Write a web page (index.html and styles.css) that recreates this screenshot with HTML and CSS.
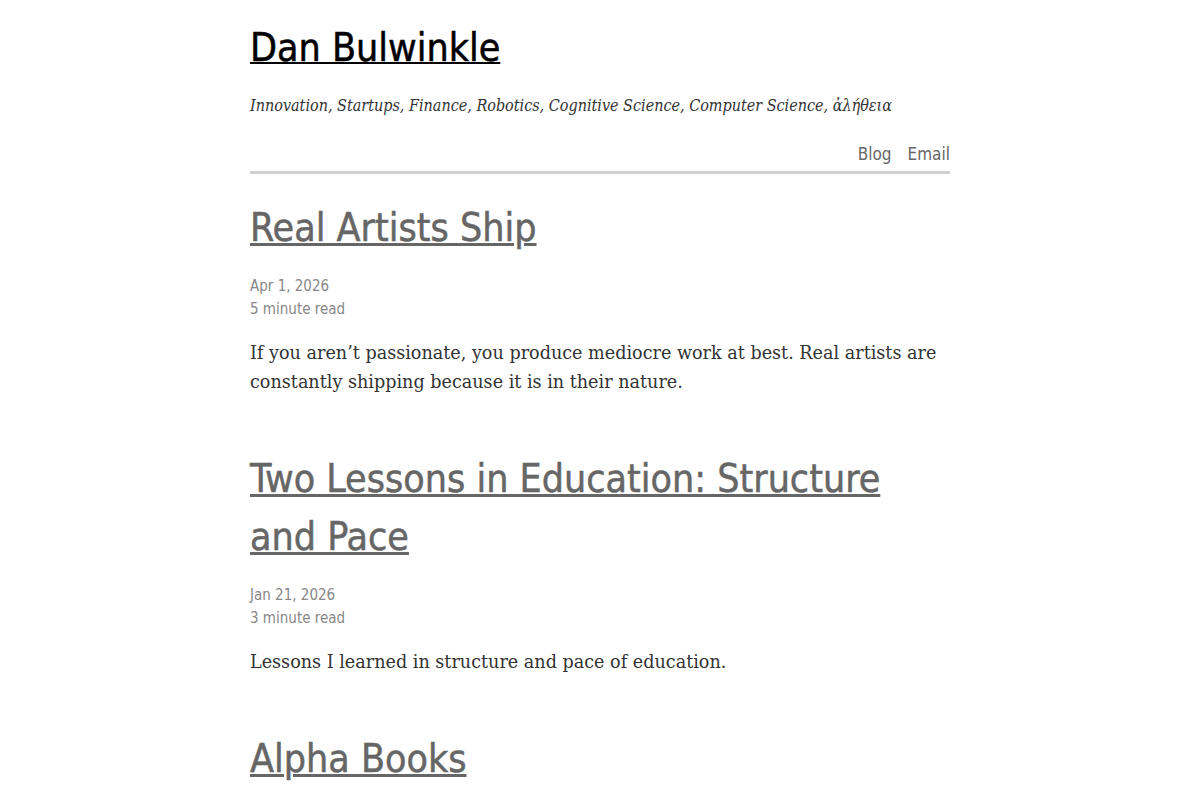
FILE: index.html
```html
<!DOCTYPE html>
<html>
  <head>
    <title>Dan Bulwinkle</title>
    <link rel="stylesheet" href="styles.css">
  </head>
  <body>
    <div class="wrapper">
      <header class="site-header">
        <h1 class="site-title"><a href="#">Dan Bulwinkle</a></h1>
        <p class="site-tagline">Innovation, Startups, Finance, Robotics, Cognitive Science, Computer Science, ἀλήθεια</p>
        <nav class="site-nav">
          <a href="#">Blog</a>
          <a href="#">Email</a>
        </nav>
      </header>

      <div class="posts">
        <article class="post">
          <h2 class="post-title"><a href="#">Real Artists Ship</a></h2>
          <div class="post-meta">
            <span>Apr 1, 2026</span>
            <span>5 minute read</span>
          </div>
          <p class="post-excerpt">If you aren’t passionate, you produce mediocre work at best. Real artists are constantly shipping because it is in their nature.</p>
        </article>

        <article class="post">
          <h2 class="post-title"><a href="#">Two Lessons in Education: Structure and Pace</a></h2>
          <div class="post-meta">
            <span>Jan 21, 2026</span>
            <span>3 minute read</span>
          </div>
          <p class="post-excerpt">Lessons I learned in structure and pace of education.</p>
        </article>

        <article class="post">
          <h2 class="post-title"><a href="#">Alpha Books</a></h2>
        </article>
      </div>
    </div>
  </body>
</html>
```

FILE: styles.css
```css
body {
  margin: 0;
  background: #fff;
  color: #333;
  font-family: "DejaVu Serif", serif;
}

.wrapper {
  width: 700px;
  margin: 0 auto;
}

/* header */

.site-header {
  display: flex;
  flex-direction: column;
  padding-top: 22px;
  border-bottom: 3px solid #d0d0d0;
}

.site-title {
  margin: 0;
  font-family: "DejaVu Sans Condensed", sans-serif;
  font-size: 39px;
  font-weight: 400;
  line-height: 52px;
  -webkit-text-stroke: 0.5px #000;
}

.site-title a {
  color: #000;
  text-decoration-thickness: 2px;
}

.site-tagline {
  margin: 21px 0 0;
  font-family: "DejaVu Serif Condensed", serif;
  font-style: italic;
  font-size: 16px;
  line-height: 22px;
  color: #333;
}

.site-nav {
  display: flex;
  justify-content: flex-end;
  gap: 16px;
  margin-top: 26px;
  padding-bottom: 6px;
  font-family: "DejaVu Sans Condensed", sans-serif;
  font-size: 17px;
  line-height: 22px;
}

.site-nav a {
  color: #666;
  text-decoration: none;
}

/* post list */

.post {
  margin-bottom: 53px;
}

.post-title {
  margin: 25px 0 0;
  font-family: "DejaVu Sans Condensed", sans-serif;
  font-size: 39px;
  font-weight: 400;
  line-height: 58px;
  -webkit-text-stroke: 0.5px #666;
}

.post-title a {
  color: #666;
  text-decoration-thickness: 3px;
}

.post-meta {
  display: flex;
  flex-direction: column;
  margin-top: 18px;
  font-family: "DejaVu Sans Condensed", sans-serif;
  font-size: 15px;
  line-height: 23px;
  color: #888;
}

.post-excerpt {
  margin: 18px 0 0;
  font-size: 17.6px;
  line-height: 29px;
  color: #333;
}
```
